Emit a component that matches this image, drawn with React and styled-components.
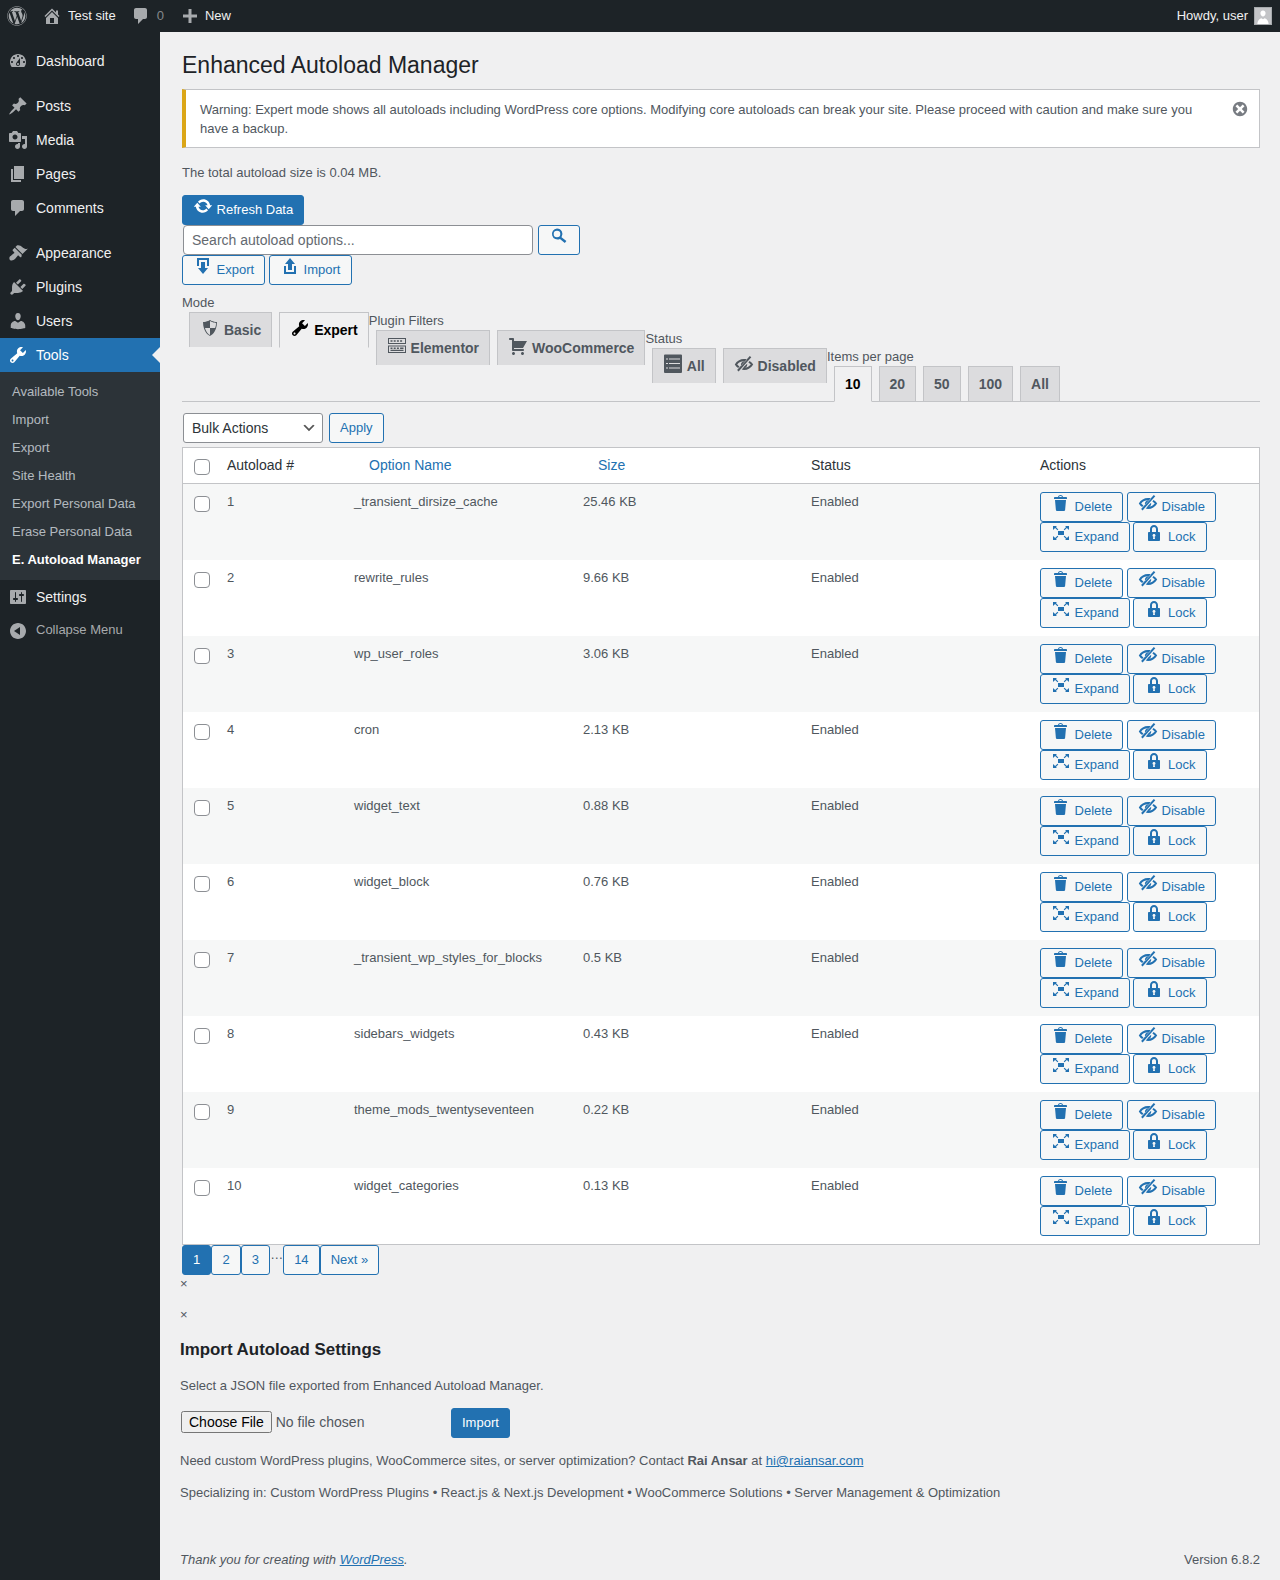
import React from "react";
import styled, { createGlobalStyle } from "styled-components";
import { FaWordpress } from "react-icons/fa";

const P = {
  dashboard: "M3.76 16h12.48c1.1-1.37 1.76-3.11 1.76-5 0-4.42-3.58-8-8-8s-8 3.58-8 8c0 1.89.66 3.63 1.76 5zM10 4c.55 0 1 .45 1 1s-.45 1-1 1-1-.45-1-1 .45-1 1-1zM6 6c.55 0 1 .45 1 1s-.45 1-1 1-1-.45-1-1 .45-1 1-1zm8 0c.55 0 1 .45 1 1s-.45 1-1 1-1-.45-1-1 .45-1 1-1zm-5.37 5.55L12 7v6c0 1.1-.9 2-2 2s-2-.9-2-2c0-.57.24-1.08.63-1.45zM4 10c.55 0 1 .45 1 1s-.45 1-1 1-1-.45-1-1 .45-1 1-1zm12 0c.55 0 1 .45 1 1s-.45 1-1 1-1-.45-1-1 .45-1 1-1zm-5 3c0-.55-.45-1-1-1s-1 .45-1 1 .45 1 1 1 1-.45 1-1z",
  pin: "M10.44 3.02l1.82-1.82 6.36 6.35-1.83 1.82c-1.05-.68-2.48-.57-3.41.36l-.75.75c-.92.93-1.04 2.35-.35 3.41l-1.83 1.82-2.41-2.41-2.8 2.79c-.42.42-3.38 2.71-3.8 2.29s1.86-3.39 2.28-3.81l2.79-2.79L4.1 9.36l1.83-1.82c1.05.69 2.48.57 3.4-.36l.75-.75c.93-.92 1.05-2.35.36-3.41z",
  media: "M13 11V4c0-.55-.45-1-1-1h-1.67L9 1H5L3.67 3H2c-.55 0-1 .45-1 1v7c0 .55.45 1 1 1h10c.55 0 1-.45 1-1zM7 4.5c1.38 0 2.5 1.12 2.5 2.5S8.38 9.5 7 9.5 4.5 8.38 4.5 7 5.62 4.5 7 4.5zM14 6h5v10.5c0 1.38-1.12 2.5-2.5 2.5S14 17.88 14 16.5s1.12-2.5 2.5-2.5c.17 0 .34.02.5.05V9h-3V6zm-4 8.05V13h2v3.5c0 1.38-1.12 2.5-2.5 2.5S7 17.88 7 16.5 8.12 14 9.5 14c.17 0 .34.02.5.05z",
  page: "M6 15V2h10v13H6zm-1 1h8v2H3V5h2v11z",
  comment: "M5 2h9c1.1 0 2 .9 2 2v7c0 1.1-.9 2-2 2h-2l-5 5v-5H5c-1.1 0-2-.9-2-2V4c0-1.1.9-2 2-2z",
  brush: "M14.48 11.06L7.41 3.99l1.5-1.5c.5-.56 2.3-.47 3.51.32 1.21.8 1.43 1.28 2.91 2.1 1.18.64 2.45 1.26 4.45.85zm-.71.71L6.7 4.7 4.93 6.47c-.39.39-.39 1.02 0 1.41l1.06 1.06c.39.39.39 1.03 0 1.42-.6.6-1.43 1.11-2.21 1.69-.35.26-.7.53-1.01.84C1.43 13.23.79 15.71 1.98 16.9c1.19 1.19 3.67.55 5.01-.79.31-.31.58-.66.84-1.01.58-.78 1.09-1.61 1.69-2.21.39-.39 1.03-.39 1.42 0l1.06 1.06c.39.39 1.02.39 1.41 0z",
  plugin: "M13.11 4.36L9.87 7.6 8 5.73l3.24-3.24c.35-.34 1.05-.2 1.56.32.52.51.66 1.21.31 1.55zm-8 1.77l.91-1.12 9.01 9.01-1.19.84c-.71.71-2.63 1.16-3.82 1.16H6.14L4.9 17.26c-.59.59-1.54.59-2.12 0-.59-.58-.59-1.53 0-2.12l1.24-1.24v-3.88c0-1.13.4-3.19 1.09-3.89zm7.26 3.97l3.24-3.24c.34-.35 1.04-.21 1.55.31.52.51.66 1.21.31 1.55l-3.24 3.25z",
  users: "M10 9.25c-2.27 0-2.73-3.44-2.73-3.44C7 4.02 7.82 2 9.97 2c2.16 0 2.98 2.02 2.71 3.81 0 0-.41 3.44-2.68 3.44zm0 2.57L12.72 10c2.39 0 4.52 2.33 4.52 4.53v2.49s-3.65 1.13-7.24 1.13c-3.65 0-7.24-1.13-7.24-1.13v-2.49c0-2.25 1.94-4.48 4.47-4.48z",
  tools: "M16.68 9.77c-1.34 1.34-3.3 1.67-4.95.99l-5.41 6.52c-.99.99-2.59.99-3.58 0s-.99-2.59 0-3.57l6.52-5.42c-.68-1.65-.35-3.61.99-4.95 1.28-1.28 3.12-1.62 4.72-1.06l-2.89 2.89 2.82 2.82 2.86-2.87c.53 1.58.18 3.39-1.08 4.65zM3.81 16.21c.4.39 1.04.39 1.43 0 .4-.4.4-1.04 0-1.43-.39-.4-1.03-.4-1.43 0-.39.39-.39 1.03 0 1.43z",
  settings: "M18 16V4c0-.55-.45-1-1-1H3c-.55 0-1 .45-1 1v12c0 .55.45 1 1 1h14c.55 0 1-.45 1-1zM8 11h1c.55 0 1 .45 1 1s-.45 1-1 1H8v1.5c0 .28-.22.5-.5.5s-.5-.22-.5-.5V13H6c-.55 0-1-.45-1-1s.45-1 1-1h1V5.5c0-.28.22-.5.5-.5s.5.22.5.5V11zm5-2h-1c-.55 0-1-.45-1-1s.45-1 1-1h1V5.5c0-.28.22-.5.5-.5s.5.22.5.5V7h1c.55 0 1 .45 1 1s-.45 1-1 1h-1v5.5c0 .28-.22.5-.5.5s-.5-.22-.5-.5V9z",
  collapse: "M18 10c0-4.42-3.58-8-8-8s-8 3.58-8 8 3.58 8 8 8 8-3.58 8-8zm-6-4v8L6 10z",
  home: "M16 8.5l1.53 1.53-1.06 1.06L10 4.62l-6.47 6.47-1.06-1.06L10 2.5l4 4v-2h2v4zm-6-2.46l6 5.99V18H4v-5.97zM12 17v-5H8v5h4z",
  plus: "M17 8.5v3h-5.5V17h-3v-5.5H3v-3h5.5V3h3v5.5z",
  update: "M10.2 3.28c3.53 0 6.43 2.61 6.92 6h2.08l-3.5 4-3.5-4h2.32c-.45-1.97-2.21-3.45-4.32-3.45-1.45 0-2.73.71-3.54 1.78L4.95 5.66C6.23 4.2 8.11 3.28 10.2 3.28zm-.4 13.44c-3.52 0-6.43-2.61-6.92-6H.8l3.5-4c1.17 1.33 2.33 2.67 3.5 4H5.48c.45 1.97 2.21 3.45 4.32 3.45 1.45 0 2.73-.71 3.54-1.78l1.71 1.95c-1.28 1.46-3.15 2.38-5.25 2.38z",
  search: "M8 2.5a5.5 5.5 0 0 1 4.5 8.66l4.9 3.94-1.6 2-4.86-4.2A5.5 5.5 0 1 1 8 2.5zm0 2.2a3.3 3.3 0 1 0 0 6.6 3.3 3.3 0 0 0 0-6.6z",
  download: "M14.01 4v6h2V2H4v8h2.01V4h8zm-2 2v6h3l-5 6-5-6h3V6h4z",
  upload: "M8 14V8H5l5-6 5 6h-3v6H8zm-2 2v-6H4v8h12.01v-8H14v6H6z",
  trash: "M12 4h3c.6 0 1 .4 1 1v1H3V5c0-.6.5-1 1-1h3c.2-1.1 1.3-2 2.5-2s2.3.9 2.5 2zM8 4h3c-.2-.6-.9-1-1.5-1S8.2 3.4 8 4zM4 7h11l-.9 10.1c0 .5-.5.9-1 .9H5.9c-.5 0-.9-.4-1-.9L4 7z",
  hidden: "M15.8 1.9l1.5 1.3L4.600 17.4l-1.500-1.300zM.8 10.400C2.800 6.900 6.200 5 10 5c1.100 0 2.100.1 3.100.5l-1.700 1.900c-.5-.1-.9-.2-1.400-.2-2.900 0-5.200 1.200-6.800 3.200.7.8 1.400 1.500 2.300 2l-1.400 1.600C2.700 13 1.600 11.800.8 10.400zM15.500 6.900c1.500.8 2.800 2 3.700 3.500-2 3.500-5.400 5.500-9.200 5.500-.8 0-1.600-.1-2.300-.3l1.700-1.900h.6c2.800 0 5.100-1.300 6.800-3.300-.7-.8-1.500-1.500-2.400-2zM10 7.500c.4 0 .7 0 1 .2l-3.900 4.300c-.1-.4-.2-.8-.2-1.300C6.900 8.900 8.200 7.500 10 7.500zM13.100 9.700c0 .3.1.7.1 1 0 1.700-1.400 3-3.200 3-.3 0-.6 0-.8-.1z",
  expand: "M7 8h6v4H7zM2 3h4L4.900 4.100l2.400 2.400-.8.8-2.400-2.400L2 6.900zM18 3h-4l1.100 1.100-2.400 2.400.8.8 2.400-2.400L18 6.900zM2 17h4l-1.100-1.100 2.400-2.400-.8-.8-2.400 2.400L2 13.100zM18 17h-4l1.100-1.100-2.400-2.400.8-.8 2.400 2.400L18 13.100z",
  lock: "M14 9h1c.55 0 1 .45 1 1v7c0 .55-.45 1-1 1H5c-.55 0-1-.45-1-1v-7c0-.55.45-1 1-1h1V6c0-2.21 1.79-4 4-4s4 1.79 4 4v3zm-2 0V6c0-1.1-.9-2-2-2s-2 .9-2 2v3h4zm-1 7l-.36-2.15c.51-.24.86-.75.86-1.35 0-.83-.67-1.5-1.5-1.5s-1.5.67-1.5 1.5c0 .6.35 1.11.86 1.35L9 16h2z",
  shield: "M10 2s3 2 7 2c0 11-7 14-7 14S3 15 3 4c4 0 7-2 7-2zm0 8h5s1-1 1-5c0 0-5-1-6-2v7H5c1 4 4 7 5 7v-7z",
  cart: "M6 13h9c.55 0 1 .45 1 1s-.45 1-1 1H5c-.55 0-1-.45-1-1V4H2c-.55 0-1-.45-1-1s.45-1 1-1h3c.55 0 1 .45 1 1v2h13l-4 7H6v1zm-.5 3c.83 0 1.5.67 1.5 1.5S6.33 19 5.5 19 4 18.33 4 17.5 4.67 16 5.5 16zm9 0c.83 0 1.5.67 1.5 1.5s-.67 1.5-1.5 1.5-1.5-.67-1.5-1.5.67-1.5 1.5-1.5z",
  keys: "M1 2h18v6H1zM2 3v4h16V3zM3.500 4.200h2v1.600h-2zM6.700 4.200h2v1.600h-2zM9.900 4.200h2v1.600h-2zM13.100 4.200h2v1.600h-2zM1 9.500h18V17H1zM2 10.500V16h16v-5.500zM3.500 11.400h2V13h-2zM6.700 11.400h2V13h-2zM9.900 11.400h2V13h-2zM13.100 11.400h3.400V13h-3.400zM3.500 13.800h13V15h-13z",
  table: "M2 .5h16a1 1 0 0 1 1 1V18a1 1 0 0 1-1 1H2a1 1 0 0 1-1-1V1.500a1 1 0 0 1 1-1zM3 4.500h2v1H3zM6 4.500h11v1H6zM3 9h2v1H3zM6 9h11v1H6zM3 13.500h2v1H3zM6 13.500h11v1H6z",
  dismiss: "M10 2c4.42 0 8 3.58 8 8s-3.58 8-8 8-8-3.58-8-8 3.58-8 8-8zm5 11l-3-3 3-3-2-2-3 3-3-3-2 2 3 3-3 3 2 2 3-3 3 3z",
};

const Global = createGlobalStyle`
  html, body { margin: 0; padding: 0; background: #f0f0f1; }
  body { font: 13px/1.4 "Liberation Sans", Arial, sans-serif; color: #50575e; }
  * { box-sizing: border-box; }
`;

const Svg = styled.svg.attrs({ viewBox: "0 0 20 20" })`
  width: 20px;
  height: 20px;
  flex: none;
  fill: currentColor;
  fill-rule: evenodd;
  display: inline-block;
  vertical-align: top;
`;
const Icon = ({ d }) => (
  <Svg>
    <path d={d} />
  </Svg>
);

const Page = styled.div`
  display: flex;
  flex-direction: column;
  min-height: 1580px;
`;
const AdminBar = styled.header`
  height: 32px;
  background: #1d2327;
  color: #f0f0f1;
  display: flex;
  align-items: center;
  padding: 0 8px 0 7px;
  line-height: 32px;
`;
const BarItem = styled.div`
  display: flex;
  align-items: center;
  gap: ${(p) => p.$gap ?? 6}px;
  margin-left: ${(p) => p.$left ?? 15}px;
  color: #f0f0f1;
  svg { color: #a7aaad; }
`;
const BarCount = styled.span`
  color: #a7aaad;
  opacity: 0.75;
`;
const BarRight = styled.div`
  margin-left: auto;
  display: flex;
  align-items: center;
  gap: 6px;
`;
const Avatar = styled.span`
  width: 18px;
  height: 18px;
  background: #c3c4c7;
  border: 1px solid #a7aaad;
  display: flex;
  overflow: hidden;
  color: #fff;
  svg { width: 16px; height: 16px; }
`;
const Body = styled.div`
  flex: 1;
  display: flex;
`;
const Side = styled.nav`
  width: 160px;
  flex: none;
  background: #1d2327;
  padding-top: 12px;
`;
const MenuItem = styled.div`
  position: relative;
  height: 34px;
  margin-top: ${(p) => (p.$sep ? 11 : 0)}px;
  display: flex;
  align-items: center;
  gap: 8px;
  padding-left: 8px;
  font-size: 14px;
  color: ${(p) => (p.$current ? "#fff" : "#f0f0f1")};
  background: ${(p) => (p.$current ? "#2271b1" : "transparent")};
  svg { color: ${(p) => (p.$current ? "#fff" : "#a7aaad")}; }
  ${(p) =>
    p.$current &&
    `&::after {
      content: "";
      position: absolute;
      right: 0;
      top: 9px;
      border: 8px solid transparent;
      border-right-color: #f0f0f1;
      border-left: 0;
    }`}
`;
const MenuLabel = styled.span`
  margin-top: 2px;
`;
const CollapseItem = styled(MenuItem)`
  font-size: 13px;
  color: #a7aaad;
  ${MenuLabel} { margin-top: -2px; }
`;
const SubMenu = styled.div`
  background: #2c3338;
  padding: 6px 0;
`;
const SubItem = styled.div`
  height: 28px;
  line-height: 28px;
  padding-left: 12px;
  font-size: 13px;
  color: ${(p) => (p.$current ? "#fff" : "rgba(240,246,252,.7)")};
  font-weight: ${(p) => (p.$current ? 600 : 400)};
`;
const Main = styled.main`
  flex: 1;
  min-width: 0;
  display: flex;
  flex-direction: column;
  padding: 10px 20px 0 22px;
`;
const Title = styled.h1`
  margin: 0;
  padding: 8px 0 5px;
  font-size: 23px;
  font-weight: 400;
  line-height: 30px;
  color: #1d2327;
`;
const Notice = styled.div`
  position: relative;
  margin-top: 4px;
  background: #fff;
  border: 1px solid #c3c4c7;
  border-left: 4px solid #dba617;
  padding: 11px 60px 8px 14px;
  line-height: 18.5px;
  height: 59px;
`;
const Dismiss = styled.span`
  position: absolute;
  top: 10px;
  right: 10px;
  color: #787c82;
  display: flex;
  svg { width: 18px; height: 18px; }
`;
const Total = styled.p`
  margin: 15px 0 12px;
  line-height: 19.5px;
`;
const Line = styled.div`
  height: 30px;
`;
const Btn = styled.button`
  display: inline-block;
  vertical-align: top;
  min-height: 30px;
  margin: 0;
  padding: 0 10.15px 0 10px;
  font: 13px/28px "Liberation Sans", Arial, sans-serif;
  white-space: nowrap;
  border-radius: 3px;
  border: 1px solid #2271b1;
  color: ${(p) => (p.$primary ? "#fff" : "#2271b1")};
  background: ${(p) => (p.$primary ? "#2271b1" : "#f6f7f7")};
`;
const SearchInput = styled.input`
  width: 350px;
  height: 30px;
  margin: 0 1px;
  padding: 0 8px;
  vertical-align: top;
  font: 14px "Liberation Sans", Arial, sans-serif;
  color: #2c3338;
  background: #fff;
  border: 1px solid #8c8f94;
  border-radius: 4px;
  &::placeholder { color: #646970; opacity: 1; }
`;
const TabWrap = styled.div`
  display: flex;
  align-items: flex-start;
  margin-top: 8px;
  height: 109px;
  border-bottom: 1px solid #c3c4c7;
`;
const Group = styled.div`
  margin-top: ${(p) => p.$step * 18}px;
`;
const GroupLabel = styled.div`
  height: 19px;
  line-height: 19px;
  white-space: nowrap;
`;
const Tabs = styled.div`
  display: flex;
  align-items: flex-start;
`;
const Tab = styled.div`
  margin-left: 7px;
  padding: 5px 10px;
  font-size: 14px;
  font-weight: 600;
  line-height: 24px;
  white-space: nowrap;
  border: 1px solid #c3c4c7;
  border-bottom: ${(p) => (p.$active ? "1px solid #f0f0f1" : "none")};
  background: ${(p) => (p.$active ? "#f0f0f1" : "#dcdcde")};
  color: ${(p) => (p.$active ? "#000" : "#50575e")};
`;
const BulkRow = styled.div`
  margin-top: 11px;
  height: 30px;
  display: flex;
  align-items: flex-start;
`;
const BulkSelect = styled.select`
  width: 140px;
  height: 30px;
  margin: 0 6px 0 1px;
  padding: 0 24px 0 8px;
  font: 14px "Liberation Sans", Arial, sans-serif;
  color: #2c3338;
  border: 1px solid #8c8f94;
  border-radius: 3px;
  appearance: none;
  background: #fff url("data:image/svg+xml,%3Csvg xmlns='http://www.w3.org/2000/svg' width='20' height='20'%3E%3Cpath d='M5 6l5 5 5-5 2 1-7 7-7-7 2-1z' fill='%23555'/%3E%3C/svg%3E") no-repeat right 5px top 55% / 16px 16px;
`;
const Table = styled.table`
  margin-top: 4px;
  width: 100%;
  table-layout: fixed;
  border-collapse: separate;
  border-spacing: 0;
  background: #fff;
  border: 1px solid #c3c4c7;
`;
const Th = styled.th`
  width: ${(p) => p.$w}px;
  padding: ${(p) => (p.$check ? "11px 0 0 11px" : "8px 10px")};
  text-align: left;
  vertical-align: top;
  font-size: 14px;
  font-weight: 400;
  line-height: 19px;
  height: 36px;
  color: #2c3338;
  border-bottom: 1px solid #c3c4c7;
`;
const SortLink = styled.a`
  color: #2271b1;
  padding-left: 15px;
`;
const Row = styled.tr`
  background: ${(p) => (p.$odd ? "#f6f7f7" : "#fff")};
`;
const Td = styled.td`
  padding: ${(p) => (p.$check ? "12px 0 0 11px" : "8px 10px")};
  vertical-align: top;
  line-height: 19.5px;
  color: #50575e;
`;
const Check = styled.input.attrs({ type: "checkbox" })`
  appearance: none;
  display: block;
  width: 16px;
  height: 16px;
  margin: 0;
  background: #fff;
  border: 1px solid #8c8f94;
  border-radius: 4px;
`;
const Pager = styled.div`
  display: flex;
  align-items: flex-start;
  height: 30px;
`;
const Dots = styled.span`
  line-height: 20px;
  color: #50575e;
`;
const Lower = styled.section`
  margin-left: -2px;
  display: flex;
  flex-direction: column;
`;
const Close = styled.div`
  line-height: 18px;
  height: 18px;
  margin-bottom: 13px;
`;
const SubTitle = styled.h2`
  margin: 1px 0 0;
  font-size: 16.9px;
  line-height: 23px;
  font-weight: 600;
  color: #1d2327;
`;
const Para = styled.p`
  margin: ${(p) => p.$top}px 0 0;
  line-height: 19.5px;
`;
const FileRow = styled.div`
  margin-top: 13px;
  height: 30px;
  display: flex;
  align-items: center;
`;
const FileInput = styled.input.attrs({ type: "file" })`
  margin: -2px 0 0 1px;
  width: 270px;
  font: 14px "Liberation Sans", Arial, sans-serif;
  color: #50575e;
  &::file-selector-button { font: 14px "Liberation Sans", Arial, sans-serif; }
`;
const Link = styled.a`
  color: #2271b1;
  text-decoration: underline;
`;
const Footer = styled.footer`
  margin: auto 0 0 -2px;
  padding-bottom: 10px;
  display: flex;
  justify-content: space-between;
  line-height: 20px;
`;

const topMenu = [
  { label: "Dashboard", d: P.dashboard },
  { label: "Posts", d: P.pin, sep: true },
  { label: "Media", d: P.media },
  { label: "Pages", d: P.page },
  { label: "Comments", d: P.comment },
  { label: "Appearance", d: P.brush, sep: true },
  { label: "Plugins", d: P.plugin },
  { label: "Users", d: P.users },
];
const subMenu = ["Available Tools", "Import", "Export", "Site Health", "Export Personal Data", "Erase Personal Data"];
const rows = [
  ["_transient_dirsize_cache", "25.46 KB"],
  ["rewrite_rules", "9.66 KB"],
  ["wp_user_roles", "3.06 KB"],
  ["cron", "2.13 KB"],
  ["widget_text", "0.88 KB"],
  ["widget_block", "0.76 KB"],
  ["_transient_wp_styles_for_blocks", "0.5 KB"],
  ["sidebars_widgets", "0.43 KB"],
  ["theme_mods_twentyseventeen", "0.22 KB"],
  ["widget_categories", "0.13 KB"],
];

export default function App() {
  return (
    <Page>
      <Global />
      <AdminBar>
        <BarItem $left={0}>
          <FaWordpress size={20} />
        </BarItem>
        <BarItem>
          <Icon d={P.home} />
          Test site
        </BarItem>
        <BarItem>
          <Icon d={P.comment} />
          <BarCount>0</BarCount>
        </BarItem>
        <BarItem $left={16} $gap={5}>
          <Icon d={P.plus} />
          New
        </BarItem>
        <BarRight>
          Howdy, user
          <Avatar>
            <svg viewBox="0 0 20 20" fill="currentColor">
              <path d="M10 3c2.200 0 3.500 1.800 3.200 4-.3 2-1.400 3.600-3.200 3.600S7.100 9 6.800 7C6.500 4.800 7.800 3 10 3zM3 20c0-4.500 3-6.800 5-7.200l2 1.200 2-1.200c2 .4 5 2.700 5 7.200z" />
            </svg>
          </Avatar>
        </BarRight>
      </AdminBar>
      <Body>
        <Side>
          {topMenu.map((m) => (
            <MenuItem key={m.label} $sep={m.sep}>
              <Icon d={m.d} />
              <MenuLabel>{m.label}</MenuLabel>
            </MenuItem>
          ))}
          <MenuItem $current>
            <Icon d={P.tools} />
            <MenuLabel>Tools</MenuLabel>
          </MenuItem>
          <SubMenu>
            {subMenu.map((s) => (
              <SubItem key={s}>{s}</SubItem>
            ))}
            <SubItem $current>E. Autoload Manager</SubItem>
          </SubMenu>
          <MenuItem>
            <Icon d={P.settings} />
            <MenuLabel>Settings</MenuLabel>
          </MenuItem>
          <CollapseItem>
            <Icon d={P.collapse} />
            <MenuLabel>Collapse Menu</MenuLabel>
          </CollapseItem>
        </Side>
        <Main>
          <Title>Enhanced Autoload Manager</Title>
          <Notice>
            Warning: Expert mode shows all autoloads including WordPress core options. Modifying core autoloads can break your site. Please proceed with caution and make sure you have a backup.
            <Dismiss>
              <Icon d={P.dismiss} />
            </Dismiss>
          </Notice>
          <Total>The total autoload size is 0.04 MB.</Total>
          <Line>
            <Btn $primary>
              <Icon d={P.update} /> Refresh Data
            </Btn>
          </Line>
          <Line>
            <SearchInput placeholder="Search autoload options..." /> <Btn><Icon d={P.search} /></Btn>
          </Line>
          <Line>
            <Btn><Icon d={P.download} /> Export</Btn> <Btn><Icon d={P.upload} /> Import</Btn>
          </Line>
          <TabWrap>
            <Group $step={0}>
              <GroupLabel>Mode</GroupLabel>
              <Tabs>
                <Tab><Icon d={P.shield} /> Basic</Tab>
                <Tab $active><Icon d={P.tools} /> Expert</Tab>
              </Tabs>
            </Group>
            <Group $step={1}>
              <GroupLabel>Plugin Filters</GroupLabel>
              <Tabs>
                <Tab><Icon d={P.keys} /> Elementor</Tab>
                <Tab><Icon d={P.cart} /> WooCommerce</Tab>
              </Tabs>
            </Group>
            <Group $step={2}>
              <GroupLabel>Status</GroupLabel>
              <Tabs>
                <Tab><Icon d={P.table} /> All</Tab>
                <Tab><Icon d={P.hidden} /> Disabled</Tab>
              </Tabs>
            </Group>
            <Group $step={3}>
              <GroupLabel>Items per page</GroupLabel>
              <Tabs>
                <Tab $active>10</Tab>
                <Tab>20</Tab>
                <Tab>50</Tab>
                <Tab>100</Tab>
                <Tab>All</Tab>
              </Tabs>
            </Group>
          </TabWrap>
          <BulkRow>
            <BulkSelect defaultValue="">
              <option value="">Bulk Actions</option>
            </BulkSelect>
            <Btn>Apply</Btn>
          </BulkRow>
          <Table>
            <thead>
              <tr>
                <Th $w={34} $check><Check /></Th>
                <Th $w={127}>Autoload #</Th>
                <Th $w={229}><SortLink>Option Name</SortLink></Th>
                <Th $w={228}><SortLink>Size</SortLink></Th>
                <Th $w={229}>Status</Th>
                <Th $w={229}>Actions</Th>
              </tr>
            </thead>
            <tbody>
              {rows.map(([name, size], i) => (
                <Row key={name} $odd={i % 2 === 0}>
                  <Td $check><Check /></Td>
                  <Td>{i + 1}</Td>
                  <Td>{name}</Td>
                  <Td>{size}</Td>
                  <Td>Enabled</Td>
                  <Td>
                    <Btn><Icon d={P.trash} /> Delete</Btn>{" "}
                    <Btn><Icon d={P.hidden} /> Disable</Btn>{" "}
                    <Btn><Icon d={P.expand} /> Expand</Btn>{" "}
                    <Btn><Icon d={P.lock} /> Lock</Btn>
                  </Td>
                </Row>
              ))}
            </tbody>
          </Table>
          <Pager>
            <Btn $primary>1</Btn>
            <Btn>2</Btn>
            <Btn>3</Btn>
            <Dots>…</Dots>
            <Btn>14</Btn>
            <Btn>Next »</Btn>
          </Pager>
          <Lower>
            <Close>×</Close>
            <Close>×</Close>
            <SubTitle>Import Autoload Settings</SubTitle>
            <Para $top={15}>Select a JSON file exported from Enhanced Autoload Manager.</Para>
            <FileRow>
              <FileInput />
              <Btn $primary>Import</Btn>
            </FileRow>
            <Para $top={13}>
              Need custom WordPress plugins, WooCommerce sites, or server optimization? Contact <strong>Rai Ansar</strong> at <Link>hi@raiansar.com</Link>
            </Para>
            <Para $top={12}>
              Specializing in: Custom WordPress Plugins • React.js &amp; Next.js Development • WooCommerce Solutions • Server Management &amp; Optimization
            </Para>
          </Lower>
          <Footer>
            <em>
              Thank you for creating with <Link>WordPress</Link>.
            </em>
            <span>Version 6.8.2</span>
          </Footer>
        </Main>
      </Body>
    </Page>
  );
}
